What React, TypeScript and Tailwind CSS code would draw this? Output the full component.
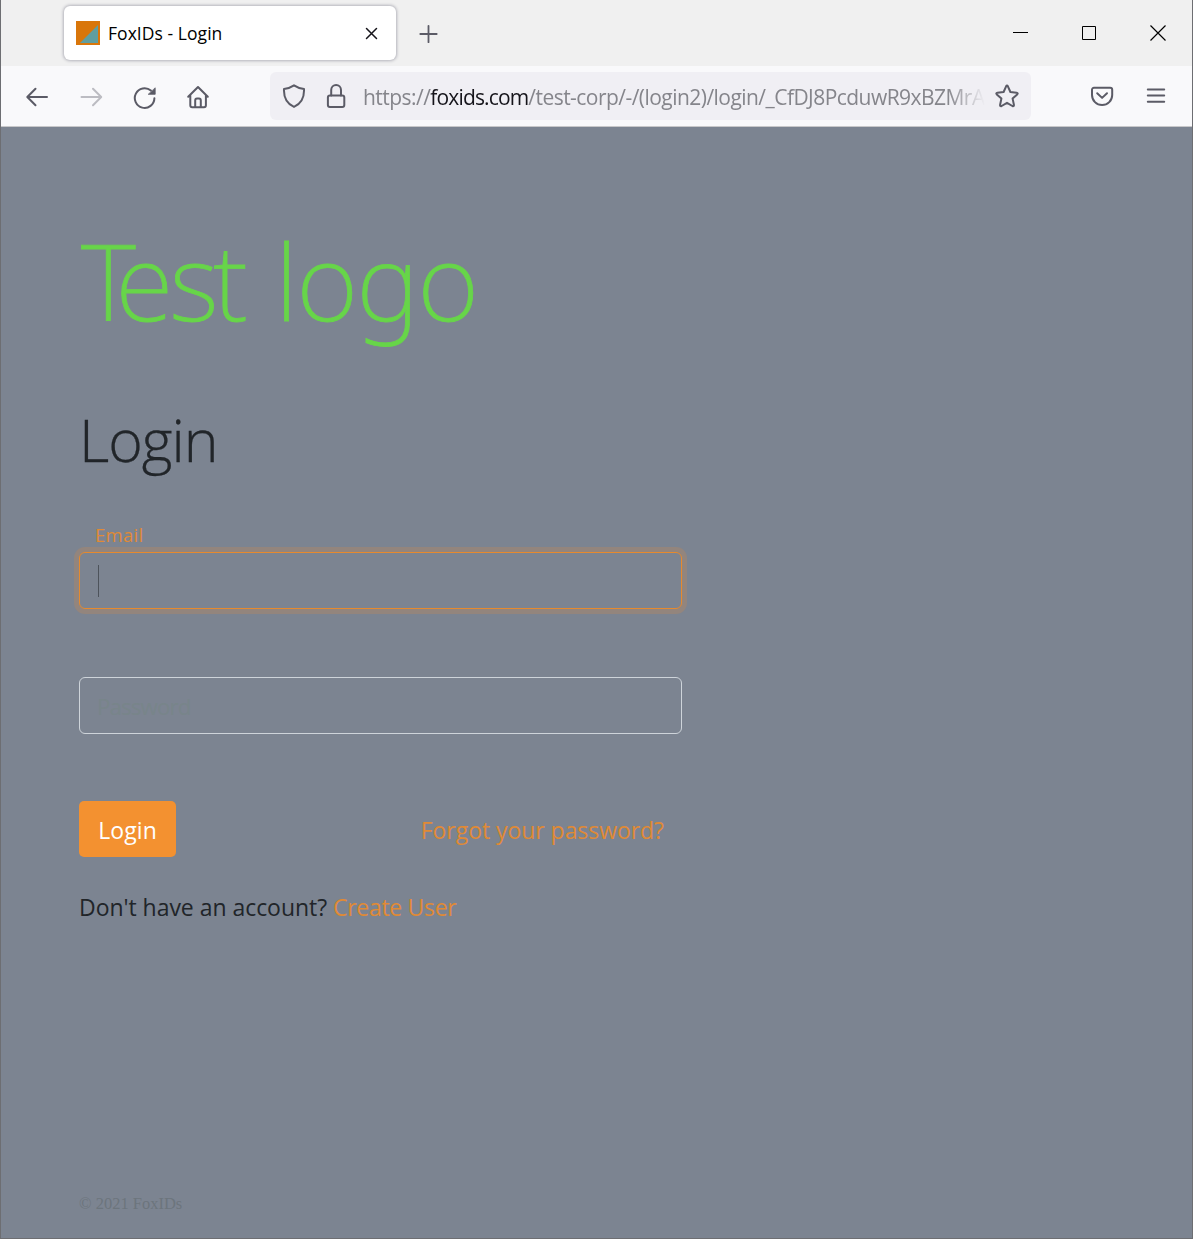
import React from 'react';

const stroke = {
  fill: 'none',
  stroke: '#5b5b66',
  strokeWidth: 2,
  strokeLinecap: 'round' as const,
  strokeLinejoin: 'round' as const,
};

function TabBar() {
  return (
    <div className="flex h-[66px] items-start bg-[#f0f0f0] pl-[63px]">
      <div className="mt-[6px] flex h-[54px] w-[332px] items-center rounded-md bg-white pl-3 pr-[16px] shadow-[0_0_3px_1px_#b4b4bc]">
        <svg className="h-6 w-6" viewBox="0 0 24 24">
          <rect width="24" height="24" fill="#d9760a" />
          <path d="M22 4V22H4Z" fill="#5f9ea0" />
        </svg>
        <span className="ml-2 flex-1 text-[17.5px] tracking-[0.05px] text-black">FoxIDs - Login</span>
        <svg className="h-4 w-4" viewBox="0 0 16 16">
          <path d="M2.5 3.5L12.5 13.5M12.5 3.5L2.5 13.5" stroke="#15141a" strokeWidth="1.5" strokeLinecap="round" />
        </svg>
      </div>
      <svg className="ml-[22px] mt-6 h-5 w-5" viewBox="0 0 20 20" {...stroke} strokeWidth={1.8}>
        <path d="M10.5 1.8V18.2M2.3 10H18.7" />
      </svg>
      <div className="ml-auto mr-[25px] mt-[24px] flex gap-[50px]">
        <svg className="h-[18px] w-[18px]" viewBox="0 0 18 18">
          <path d="M2 8.5H17" stroke="#000" />
        </svg>
        <svg className="h-[18px] w-[18px]" viewBox="0 0 18 18">
          <path d="M3.5 2.5H16.5V15.5H3.5Z" fill="none" stroke="#000" />
        </svg>
        <svg className="ml-[2px] h-[18px] w-[18px]" viewBox="0 0 18 18">
          <path d="M1.5 1.5L16.5 16.5M16.5 1.5L1.5 16.5" stroke="#000" strokeWidth="1.2" />
        </svg>
      </div>
    </div>
  );
}

function Toolbar() {
  return (
    <div className="flex h-[61px] items-start border-b border-[#c8c8ca] bg-[#f9f9fb] pl-6">
      <svg className="mt-[19px] h-6 w-6" viewBox="0 0 24 24" {...stroke}>
        <path d="M22 12H2.5M10.5 3.8L2.3 12L10.5 20.2" />
      </svg>
      <svg className="ml-[30px] mt-[19px] h-6 w-6" viewBox="0 0 24 24" {...stroke} stroke="#bcbcc2">
        <path d="M2.5 12H22M14 3.8L22.2 12L14 20.2" />
      </svg>
      <svg className="ml-[29px] mt-[19px] h-6 w-6" viewBox="0 0 24 24" {...stroke}>
        <path d="M22.4 13.3A9.8 9.8 0 1 1 18.9 5.6" />
        <path d="M23.2 3.2V9.3H16.6Z" fill="#5b5b66" stroke="#5b5b66" strokeWidth="0.8" />
      </svg>
      <svg className="ml-[30px] mt-[19px] h-6 w-6" viewBox="0 0 24 24" {...stroke}>
        <path d="M2.2 11.8L12 2L21.8 11.8M4.3 10.2V20.3C4.3 21.5 5 22.2 6.2 22.2H18C19.2 22.2 19.9 21.5 19.9 20.3V10.2" />
        <path d="M9.2 22V15.4C9.2 14.3 10 13.5 11 13.5H13C14 13.5 14.8 14.3 14.8 15.4V22" />
      </svg>
      <div className="ml-[60px] mt-[6px] flex h-12 w-[761px] items-center rounded-md bg-[#f0eff4]">
        <svg className="ml-3 h-6 w-6" viewBox="0 0 24 24" {...stroke}>
          <path d="M12 1.3C15 3.3 18.4 4.5 22 5C22.4 13 19.2 19.6 12 22.9C4.8 19.6 1.6 13 2 5C5.6 4.5 9 3.3 12 1.3Z" />
        </svg>
        <svg className="ml-[18px] h-6 w-6" viewBox="0 0 24 24" {...stroke}>
          <rect x="3.9" y="11.5" width="16.4" height="11.5" rx="2" />
          <path d="M7.2 11.5V6A4.9 4.9 0 0 1 17 6V11.5" />
        </svg>
        <div className="ml-[15px] mt-[4px] w-[622px] overflow-hidden whitespace-nowrap text-[21px] tracking-[-0.54px] text-[#85858b] [mask-image:linear-gradient(to_right,black_94%,transparent)]">
          https://<span className="tracking-[-0.85px] text-[#15141a]">foxids.com</span>/test-corp/-/(login2)/login/_CfDJ8PcduwR9xBZMrA
        </div>
        <svg className="ml-[10px] h-6 w-6 shrink-0" viewBox="0 0 24 24" {...stroke}>
          <path d="M11.1 2.3Q12 .7 12.9 2.3L15.4 8L21.6 8.7Q23.4 9 22.2 10.4L17.6 14.6L18.9 20.8Q19.1 22.6 17.4 22L12 18.8L6.6 22Q4.9 22.6 5.1 20.8L6.4 14.6L1.8 10.4Q.6 9 2.4 8.7L8.6 8Z" />
        </svg>
      </div>
      <svg className="ml-[59px] mt-[18px] h-6 w-6" viewBox="0 0 24 24" {...stroke}>
        <path d="M4 3.8H20.2C21.4 3.8 22.2 4.6 22.2 5.8V11A10.1 10.1 0 0 1 2 11V5.8C2 4.6 2.8 3.8 4 3.8ZM7.2 9.2L12.1 13.9L17 9.2" />
      </svg>
      <svg className="ml-[30px] mt-[18px] h-6 w-6" viewBox="0 0 24 24" {...stroke}>
        <path d="M3.8 5.5H20.2M3.8 11.5H20.2M3.8 17.7H20.2" />
      </svg>
    </div>
  );
}

export default function App() {
  return (
    <div className="flex h-[1239px] w-[1193px] flex-col border-x border-b border-[#6d6e72] bg-[#7c8491] font-['Open_Sans','Noto_Sans',sans-serif]">
      <TabBar />
      <Toolbar />
      <main className="flex flex-1 flex-col items-start pl-[78px] text-[23px] text-[#212529]">
        <div className="ml-[2px] mt-[73px] h-[160px] whitespace-nowrap font-['Noto_Sans'] text-[106px] font-[250] leading-[160px] tracking-[-1.6px] text-[#67d549] [-webkit-text-stroke:0.8px_#67d549]">
          <span className="tracking-[-20px]">T</span>
          <span className="tracking-[-4px]">e</span>
          <span className="tracking-[-5px]">s</span>
          <span className="tracking-[1px]">t</span> logo
        </div>
        <h1 className="mt-[39px] h-[80px] whitespace-nowrap font-['Open_Sans'] text-[59px] font-light leading-[80px] tracking-[-1px] [-webkit-text-stroke:0.3px_#212529]">Login</h1>
        <label className="ml-4 mt-[42px] h-[31px] text-[18.5px] leading-[28px] tracking-[0.3px] text-[#e08a35]">Email</label>
        <div className="flex h-[57px] w-[603px] items-center rounded-md border border-[#e68a2e] pl-[18px] shadow-[0_0_0_5px_#93857d]">
          <span className="h-8 w-px bg-[#4d535b]" />
        </div>
        <div className="mt-[68px] flex h-[57px] w-[603px] items-center rounded-md border border-[#ced4da] pl-[17px] pt-[2px] text-[22.5px] tracking-[-1px] text-[#78858a]">
          Password
        </div>
        <div className="mt-[67px] flex h-14 w-[603px] items-center justify-between pr-[18px]">
          <button className="flex h-14 w-[97px] items-center justify-center rounded-[5px] bg-[#f39130] pt-[3px] text-[23px] tracking-[0.1px] text-white">Login</button>
          <a className="pt-[2px] tracking-[-0.05px] text-[#e08a35]">Forgot your password?</a>
        </div>
        <p className="mt-[32px] h-9 whitespace-nowrap leading-9 tracking-[-0.04px]">
          Don't have an account? <a className="tracking-[-0.3px] text-[#e08a35]">Create User</a>
        </p>
        <footer className="mt-auto mb-[22px] font-['Liberation_Serif'] text-[16.5px] leading-6 text-[#6c757d]">© 2021 FoxIDs</footer>
      </main>
    </div>
  );
}
